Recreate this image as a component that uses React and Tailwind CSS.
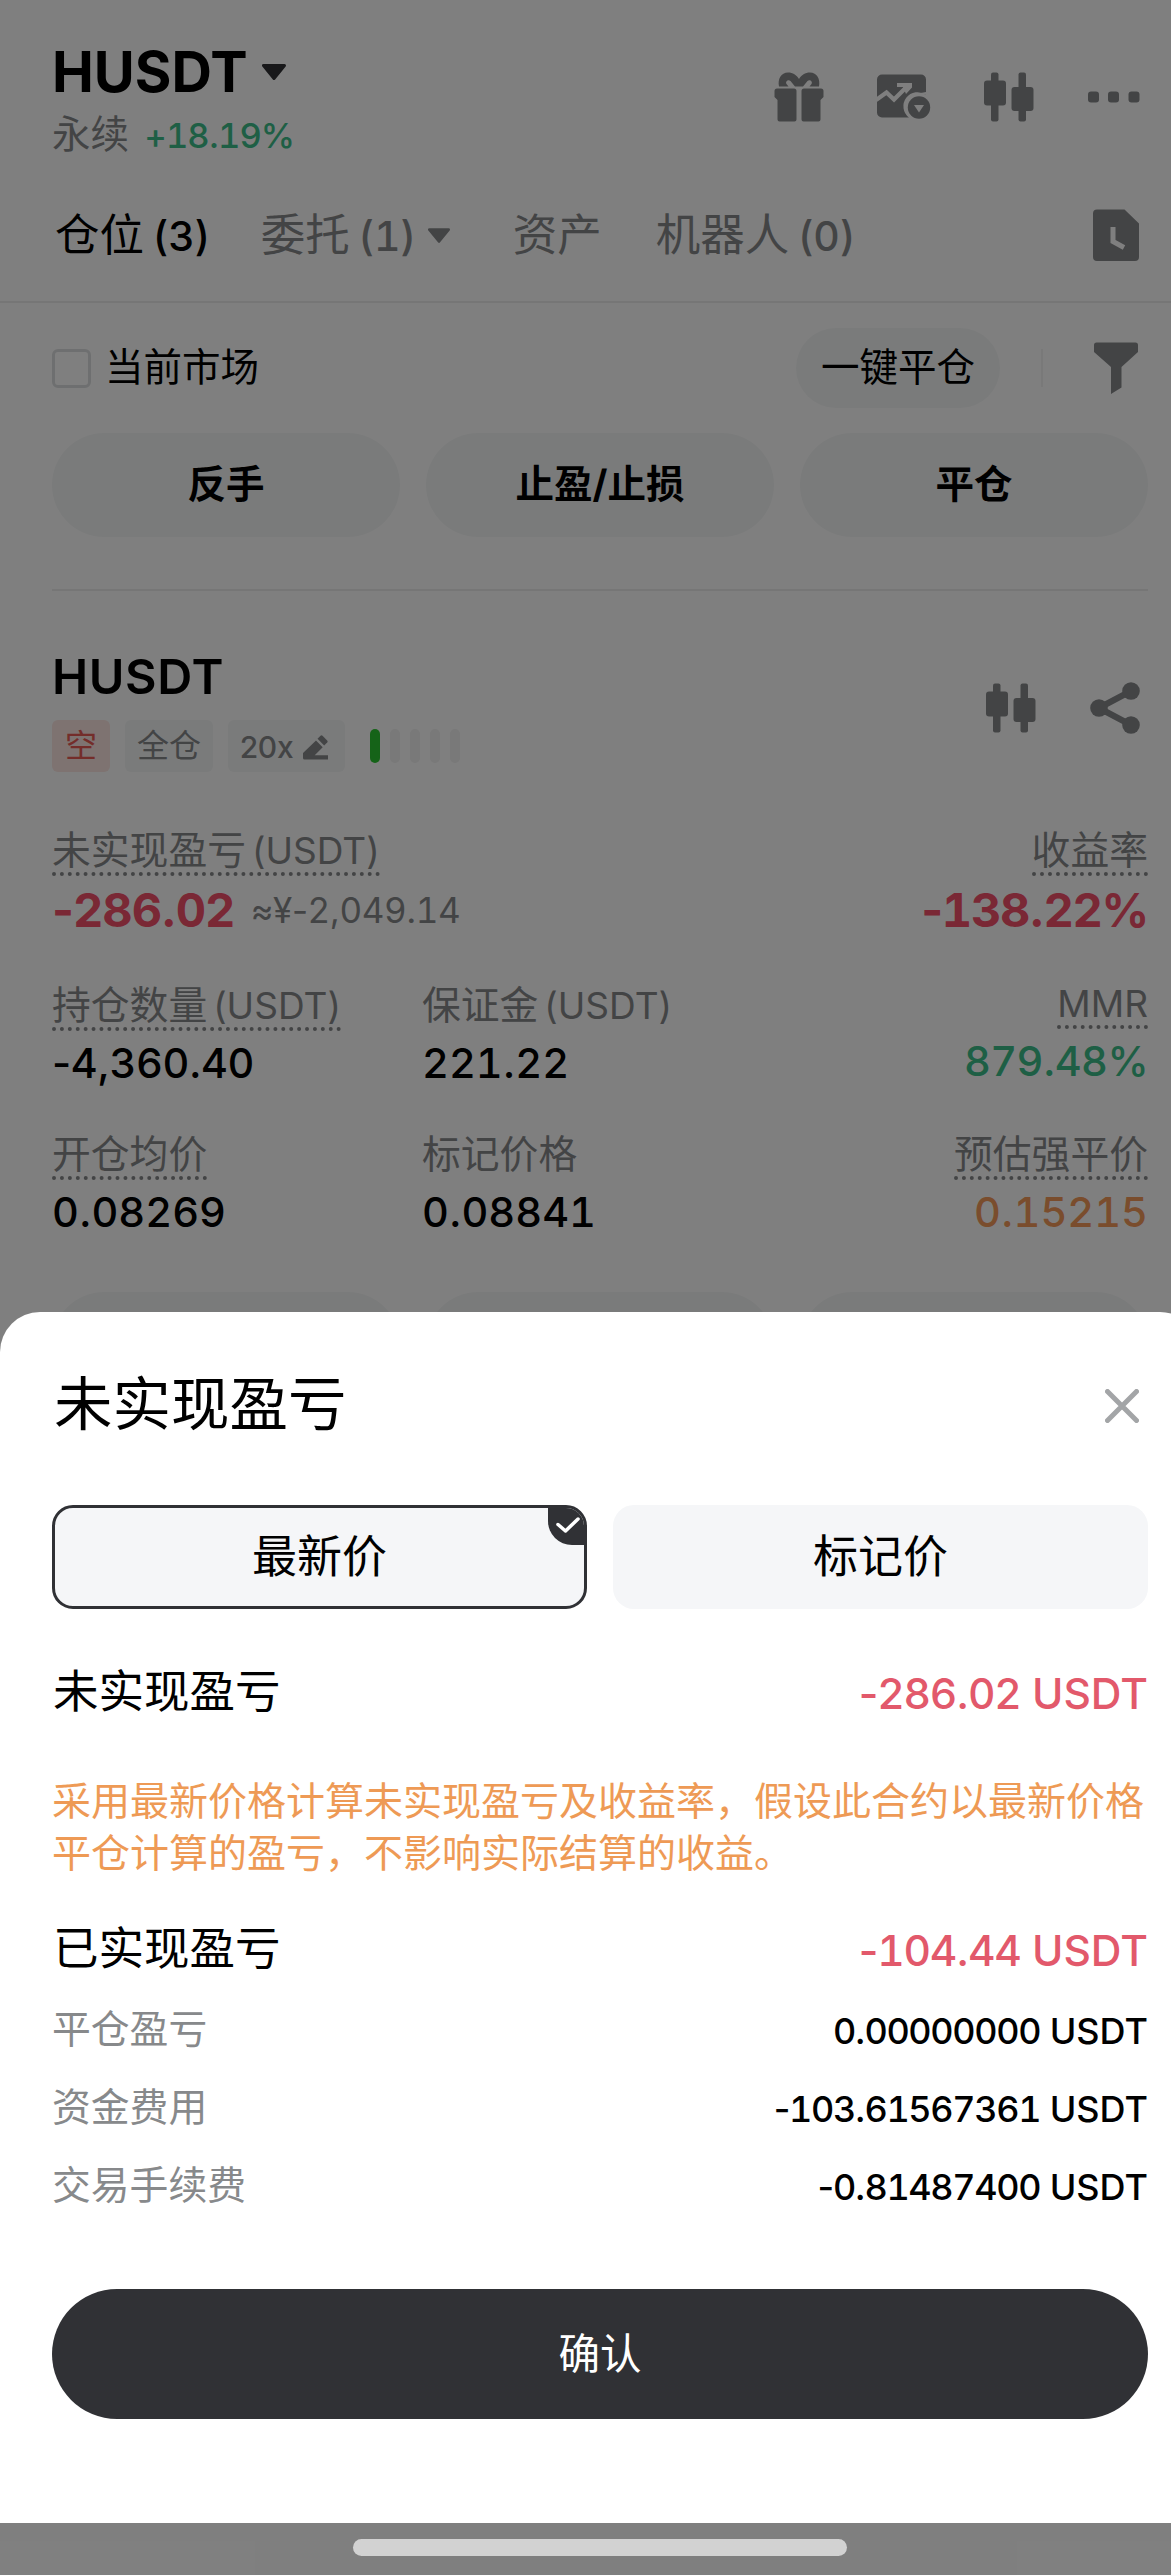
const SHEET_ROWS = [
  { label: '平仓盈亏', value: '0.00000000' },
  { label: '资金费用', value: '-103.61567361' },
  { label: '交易手续费', value: '-0.81487400' },
];

/** Digits get tabular widths, signs and punctuation keep their natural ones. */
function Num({ children }) {
  return children.split(/(\d+)/).map((part, i) =>
    i % 2 ? (
      <span key={i} className="tabular-nums">
        {part}
      </span>
    ) : (
      part
    ),
  );
}

function Caret({ className }) {
  return (
    <svg viewBox="0 0 24 16" className={className} fill="currentColor" stroke="currentColor" strokeWidth="3" strokeLinejoin="round">
      <path d="M1.5 1.5h21L12 14.5z" />
    </svg>
  );
}

function GiftIcon() {
  return (
    <svg viewBox="0 0 50 50" className="h-[50px] w-[50px]" fill="currentColor">
      <path d="M5 14.5C3.5 7 7 .5 14 .5c5 0 8.500 2.500 11 6.500C27.500 3 31 .5 36 .5c7 0 10.500 6.500 9 14h-9.500l2-2.500c1.500-2-1.500-5-4-3l-4.500 5.500h-8L16.500 9c-2.500-2-5.500 1-4 3l2 2.500z" />
      <path d="M3 16.500h17a2.500 2.500 0 0 1 2.500 2.500v28.500a2 2 0 0 1-2 2H5.500a2 2 0 0 1-2-2V28L.5 25v-6A2.500 2.500 0 0 1 3 16.500z" />
      <path d="M47 16.500H30a2.500 2.500 0 0 0-2.500 2.500v28.500a2 2 0 0 0 2 2h15a2 2 0 0 0 2-2V28l3-3v-6a2.500 2.500 0 0 0-2.500-2.500z" />
    </svg>
  );
}

function ChartImageIcon() {
  return (
    <svg viewBox="0 0 54 46" className="h-[46px] w-[54px]">
      <path fill="currentColor" d="M5 .5h39a5 5 0 0 1 5 5v15.500a14 14 0 0 0-17 22.500H5a5 5 0 0 1-5-5v-33a5 5 0 0 1 5-5z" />
      <path d="M-1 26 9.500 18.500 17 25.500 30 12.500" fill="none" stroke="#fff" strokeWidth="4.200" />
      <path d="M20 9h15v4.500L29 20l-3-7h-6z" fill="#fff" />
      <circle cx="42" cy="33.500" r="14" fill="#fff" />
      <path d="M49 18v3a14 14 0 0 0-8-1.500z" fill="#fff" />
      <circle cx="42" cy="33.500" r="11.200" fill="currentColor" />
      <path d="M37 31h10l-5 7.500z" fill="#fff" />
    </svg>
  );
}

function CandlesIcon() {
  return (
    <svg viewBox="0 0 50 50" className="h-[50px] w-[50px]" fill="currentColor">
      <rect x="7" y=".5" width="7.500" height="49" rx="2" />
      <rect x="0" y="8.500" width="22" height="25" rx="3" />
      <rect x="34.500" y=".5" width="7.500" height="49" rx="2" />
      <rect x="27.500" y="15" width="22" height="24" rx="3" />
    </svg>
  );
}

function MoreIcon() {
  return (
    <svg viewBox="0 0 52 12" className="h-3 w-[52px]" fill="currentColor">
      <rect x="0" y=".5" width="11" height="11" rx="3" />
      <rect x="20" y=".5" width="11" height="11" rx="3" />
      <rect x="40.500" y=".5" width="11" height="11" rx="3" />
    </svg>
  );
}

function HistoryIcon() {
  return (
    <svg viewBox="0 0 46 52" className="h-[52px] w-[46px]">
      <path fill="currentColor" d="M4 .5h27.500L46 14.500V48a4 4 0 0 1-4 4H4a4 4 0 0 1-4-4V4.500a4 4 0 0 1 4-4z" />
      <path d="M20 18v14.500l11 6" fill="none" stroke="#fff" strokeWidth="5" />
    </svg>
  );
}

function FilterIcon() {
  return (
    <svg viewBox="0 0 44 52" className="h-[52px] w-11" fill="currentColor">
      <path d="M2.500.5h39a2.500 2.500 0 0 1 2.500 2.500v7L27.500 25v20.500L17 52V25L0 10V3A2.500 2.500 0 0 1 2.500.5z" />
    </svg>
  );
}

function ShareIcon() {
  return (
    <svg viewBox="0 0 50 52" className="h-[52px] w-[50px]" fill="currentColor">
      <path d="M41 9 9 26l32 17" fill="none" stroke="currentColor" strokeWidth="6.500" />
      <circle cx="41" cy="9" r="8.800" />
      <circle cx="9" cy="26" r="8.800" />
      <circle cx="41" cy="43" r="8.800" />
    </svg>
  );
}

function PencilIcon() {
  return (
    <svg viewBox="0 0 26 25" className="h-[25px] w-[26px]" fill="currentColor">
      <path d="M17.500.8a1.500 1.500 0 0 1 2 0l4.700 4.700a1.500 1.500 0 0 1 0 2l-3 3-6.700-6.700z" />
      <path d="m13 5.500 6.700 6.700-8 8H25V24.500H1.500a1.500 1.500 0 0 1-1.500-1.500v-5z" />
    </svg>
  );
}

function ActionButtons({ className = '' }) {
  return (
    <div className={`grid h-[104px] grid-cols-3 gap-[26px] text-[38.500px] font-bold ${className}`}>
      {['反手', '止盈/止损', '平仓'].map((text) => (
        <button key={text} className="rounded-full bg-[#f5f7f7]">
          {text}
        </button>
      ))}
    </div>
  );
}

function Stat({ label, value, hint, dotted, right, rowClass = '', valueClass = 'text-[41.500px] font-medium' }) {
  return (
    <div className={`flex flex-col ${right ? 'items-end' : 'items-start'}`}>
      <span
        className={`h-[50px] whitespace-nowrap text-[38.800px] leading-[48px] text-[#87898b] ${
          dotted ? 'border-b-4 border-dotted border-[#87898b]' : ''
        }`}
      >
        {label}
      </span>
      <div className={`mt-1 flex h-14 items-center whitespace-nowrap ${rowClass}`}>
        <span className={valueClass}>
          <Num>{value}</Num>
        </span>
        {hint}
      </div>
    </div>
  );
}

/** A CJK label followed by its unit, the unit set a little smaller. */
function WithUnit({ children }) {
  return (
    <>
      {children} <span className="-ml-[5px] text-[37px]">(USDT)</span>
    </>
  );
}

function TabCount({ children }) {
  return (
    <span className="pt-1 text-[41px] font-medium">
      <Num>{children}</Num>
    </span>
  );
}

function TradePage() {
  return (
    <div className="pl-[52px] pr-[23px]">
      <header className="flex justify-between pt-[42px]">
        <div>
          <h1 className="flex h-[60px] items-center text-[56px] font-bold">
            HUSDT
            <Caret className="ml-[14px] h-4 w-6 text-[#303135]" />
          </h1>
          <p className="mt-2 flex h-[50px] items-center gap-[15px] text-[38.500px] text-[#87898b]">
            永续
            <span className="pt-0.5 text-[34.500px] font-medium tracking-[-0.03em] text-[#3dbf8a]">
              <Num>+18.19%</Num>
            </span>
          </p>
        </div>
        <div className="flex h-[110px] items-center pr-2 text-[#87898b]">
          <GiftIcon />
          <div className="ml-[53px]"><ChartImageIcon /></div>
          <div className="ml-[53px]"><CandlesIcon /></div>
          <div className="ml-[54px]"><MoreIcon /></div>
        </div>
      </header>

      <nav className="-ml-[52px] -mr-[23px] mt-[45px] flex h-[98px] items-start border-b-2 border-[#ededed] pl-[55px] pr-8 text-[44.500px] text-[#87898b]">
        <span className="flex h-[60px] items-center gap-[9px] text-black">
          仓位 <TabCount>(3)</TabCount>
        </span>
        <span className="ml-[51px] flex h-[60px] items-center gap-[9px]">
          委托 <TabCount>(1)</TabCount>
          <Caret className="ml-[3px] h-[15px] w-[22px]" />
        </span>
        <span className="ml-[63px] flex h-[60px] items-center">资产</span>
        <span className="ml-[54px] flex h-[60px] items-center gap-[9px]">
          机器人 <TabCount>(0)</TabCount>
        </span>
        <span className="ml-auto flex h-[60px] items-center"><HistoryIcon /></span>
      </nav>

      <div className="mt-[25px] flex h-20 items-center text-[38.500px]">
        <span className="h-[39px] w-[39px] rounded-md border-3 border-[#dddfe0]" />
        <span className="ml-[14px]">当前市场</span>
        <button className="ml-auto h-20 w-[204px] rounded-full bg-[#f5f7f7]">一键平仓</button>
        <span className="ml-[41px] h-[38px] w-0.5 bg-[#f2f2f2]" />
        <span className="ml-[51px] mr-2.5 text-[#87898b]"><FilterIcon /></span>
      </div>

      <ActionButtons className="mt-[25px]" />

      <section className="mt-[52px] border-t-2 border-[#ededed] pt-14">
        <div className="flex justify-between">
          <div>
            <h2 className="h-[60px] text-[48.500px] font-semibold leading-[60px] tracking-[0.013em]">HUSDT</h2>
            <div className="mt-[13px] flex h-[52px] items-center text-[32px] text-[#87898b]">
              <span className="flex h-[52px] w-[58px] items-center justify-center rounded-md bg-[#fde6e2] text-[#e85b55]">空</span>
              <span className="ml-[15px] flex h-[52px] w-[88px] items-center justify-center rounded-md bg-[#f5f7f7]">全仓</span>
              <span className="ml-[15px] flex h-[52px] w-[117px] items-center justify-center gap-2.5 rounded-md bg-[#f5f7f7] pr-1 pt-0.5 text-[30px] font-medium tracking-[-0.01em]">
                20x <PencilIcon />
              </span>
              <span className="ml-[25px] flex gap-2.5">
                <i className="h-[34px] w-2.5 rounded-full bg-[#2bc731]" />
                <i className="h-[34px] w-2.5 rounded-full bg-[#f2f2f2]" />
                <i className="h-[34px] w-2.5 rounded-full bg-[#f2f2f2]" />
                <i className="h-[34px] w-2.5 rounded-full bg-[#f2f2f2]" />
                <i className="h-[34px] w-2.5 rounded-full bg-[#f2f2f2]" />
              </span>
            </div>
          </div>
          <div className="flex h-[121px] items-center gap-[54px] pr-2 text-[#87898b]">
            <CandlesIcon />
            <ShareIcon />
          </div>
        </div>

        <div className="mt-[54px] flex justify-between">
          <Stat
            label={<WithUnit>未实现盈亏</WithUnit>}
            value="-286.02"
            dotted
            rowClass="pt-1"
            valueClass="text-[47px] font-bold tracking-[-0.022em] text-[#f5506a]"
            hint={
              <span className="ml-4 text-[35px] tracking-[-0.013em] text-[#87898b]">
                <Num>≈¥-2,049.14</Num>
              </span>
            }
          />
          <Stat
            label="收益率"
            value="-138.22%"
            dotted
            right
            rowClass="pt-1"
            valueClass="text-[47px] font-bold tracking-[-0.028em] text-[#f5506a]"
          />
        </div>
        <div className="mt-[45px] grid grid-cols-[370px_1fr_auto] gap-y-[39px]">
          <Stat label={<WithUnit>持仓数量</WithUnit>} value="-4,360.40" dotted valueClass="text-[41.500px] font-medium tracking-[-0.01em]" />
          <Stat label={<WithUnit>保证金</WithUnit>} value="221.22" />
          <div className="-mt-0.5">
            <Stat
              label={<span className="text-[37px]">MMR</span>}
              value="879.48%"
              dotted
              right
              valueClass="text-[41.500px] font-medium tracking-[-0.015em] text-[#3dbf8a]"
            />
          </div>
          <Stat label="开仓均价" value="0.08269" dotted />
          <Stat label="标记价格" value="0.08841" />
          <Stat label="预估强平价" value="0.15215" dotted right valueClass="text-[41.500px] font-medium text-[#f59a5a]" />
        </div>
        <ActionButtons className="mt-[52px]" />
      </section>
    </div>
  );
}

function PnlTotal({ label, value, className }) {
  return (
    <div className={`flex h-[60px] items-center justify-between text-[45.500px] ${className}`}>
      <span className="ml-px">{label}</span>
      <span className="pt-1 text-[42.500px] font-medium text-[#e2596b]">
        <span className="tracking-[-0.028em]">
          <Num>{value}</Num>
        </span>{' '}
        USDT
      </span>
    </div>
  );
}

function PnlSheet() {
  return (
    <div className="absolute left-0 top-[1312px] h-[1211px] w-[1200px] rounded-t-[40px] bg-white pl-[52px] pr-[52px] pt-[52px]">
      <div className="flex h-20 items-center justify-between pr-[9px]">
        <h3 className="ml-0.5 text-[58.500px]">未实现盈亏</h3>
        <svg viewBox="0 0 34 34" className="mt-1 h-[34px] w-[34px]" stroke="#a3a5a7" strokeWidth="5" strokeLinecap="round">
          <path d="m2.500 2.500 29 29M31.500 2.500l-29 29" />
        </svg>
      </div>

      <div className="mt-[61px] grid h-[104px] grid-cols-2 gap-[26px] text-[45px]">
        <button className="relative overflow-hidden rounded-[21px] border-3 border-[#303135] bg-[#f5f6f8]">
          最新价
          <span className="absolute -right-[3px] -top-[3px] flex h-10 w-[39px] items-center justify-center rounded-bl-3xl bg-[#303135]">
            <svg viewBox="0 0 24 16" className="h-4 w-6" fill="none" stroke="#fff" strokeWidth="3.500" strokeLinecap="round" strokeLinejoin="round">
              <path d="m2 7.500 7.500 6.500L22 2" />
            </svg>
          </span>
        </button>
        <button className="rounded-[21px] bg-[#f5f6f8]">标记价</button>
      </div>

      <PnlTotal className="mt-[53px]" label="未实现盈亏" value="-286.02" />

      <p className="mt-[53px] whitespace-nowrap text-[39px] leading-[52px] text-[#ee9a55]">
        采用最新价格计算未实现盈亏及收益率，假设此合约以最新价格
        <br />
        平仓计算的盈亏，不影响实际结算的收益。
      </p>

      <PnlTotal className="mt-10" label="已实现盈亏" value="-104.44" />
      <div className="mt-[11px]">
        {SHEET_ROWS.map((row) => (
          <div key={row.label} className="flex h-[78px] items-center justify-between">
            <span className="text-[38.800px] text-[#87898b]">{row.label}</span>
            <span className="pt-1 text-[36px] font-medium">
              <span className="tracking-[-0.038em]">
                <Num>{row.value}</Num>
              </span>{' '}
              USDT
            </span>
          </div>
        ))}
      </div>

      <button className="mt-[65px] h-[130px] w-full rounded-full bg-[#303135] text-[41.500px] text-white">确认</button>
    </div>
  );
}

export default function App() {
  return (
    <div
      lang="zh-CN"
      className="relative h-[2575px] w-full overflow-hidden bg-white font-['Inter','Noto_Sans_CJK_SC',sans-serif] text-black"
    >
      <TradePage />
      <div className="absolute inset-0 bg-black/50" />
      <PnlSheet />
      <div className="absolute bottom-[19px] left-[353px] h-[17px] w-[494px] rounded-full bg-[#d2d2d2]" />
    </div>
  );
}
